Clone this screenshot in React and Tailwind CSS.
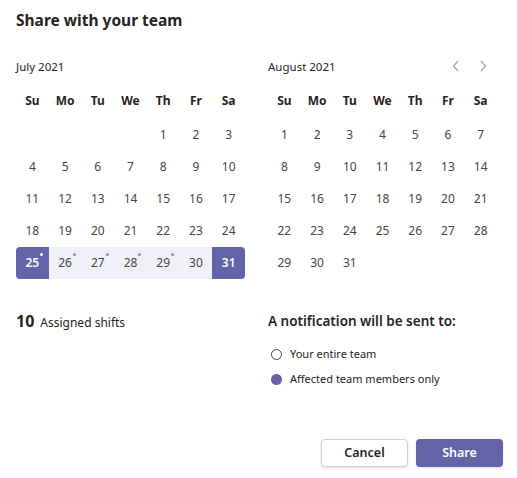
import React, { useState } from "react";

const DAYS = ["Su", "Mo", "Tu", "We", "Th", "Fr", "Sa"];

const julyCells = [
  null, null, null, null, 1, 2, 3,
  4, 5, 6, 7, 8, 9, 10,
  11, 12, 13, 14, 15, 16, 17,
  18, 19, 20, 21, 22, 23, 24,
  25, 26, 27, 28, 29, 30, 31,
];

const augustCells = [
  1, 2, 3, 4, 5, 6, 7,
  8, 9, 10, 11, 12, 13, 14,
  15, 16, 17, 18, 19, 20, 21,
  22, 23, 24, 25, 26, 27, 28,
  29, 30, 31, null, null, null, null,
];

const shiftDays = [25, 26, 27, 28, 29];

const DayCell = ({ day, range }) => {
  if (!day) return <div className="h-8" />;
  const inRange = range && day >= 25 && day <= 31;
  const isEdge = range && (day === 25 || day === 31);
  const hasShift = range && shiftDays.includes(day);

  let cls = "h-8 flex items-center justify-center text-[12px] text-[#484644]";
  if (inRange) cls = "h-8 flex items-center justify-center text-[12px] text-[#484644] bg-[#f0f0f8]";
  if (isEdge) cls = "h-8 flex items-center justify-center text-[12px] font-semibold text-white bg-[#6264a7]";
  const rounded = range && day === 25 ? " rounded-l" : range && day === 31 ? " rounded-r" : "";

  return (
    <div className={cls + rounded}>
      <span className="relative">
        {day}
        {hasShift && (
          <span
            className={
              "absolute -top-[1px] -right-[4px] w-[3px] h-[3px] rounded-full " +
              (day === 25 ? "bg-white" : "bg-[#8b8cc7]")
            }
          />
        )}
      </span>
    </div>
  );
};

const Month = ({ title, cells, range, nav }) => (
  <div className="w-[229px]">
    <div className="h-[30px] flex items-center justify-between">
      <span className="text-[11.5px] text-[#252423]">{title}</span>
      {nav && (
        <div className="flex items-center gap-[19px] pr-[10px] text-[#a19f9d] -mt-[3px]">
          <svg width="8" height="12" viewBox="0 0 8 12" fill="none">
            <path d="M6 1 L1.5 6 L6 11" stroke="currentColor" strokeWidth="1.2" />
          </svg>
          <svg width="8" height="12" viewBox="0 0 8 12" fill="none">
            <path d="M2 1 L6.5 6 L2 11" stroke="currentColor" strokeWidth="1.2" />
          </svg>
        </div>
      )}
    </div>
    <div className="grid grid-cols-7 mt-[3px]">
      {DAYS.map((d) => (
        <div key={d} className="h-8 flex items-center justify-center text-[12px] font-bold text-[#252423]">
          {d}
        </div>
      ))}
    </div>
    <div className="grid grid-cols-7 mt-[2px]">
      {cells.map((c, i) => (
        <DayCell key={i} day={c} range={range} />
      ))}
    </div>
  </div>
);

const Radio = ({ checked, label, onClick }) => (
  <button onClick={onClick} className="flex items-center gap-[8px] h-[25px] pl-[3px]">
    {checked ? (
      <span className="w-[11px] h-[11px] rounded-full bg-[#6264a7]" />
    ) : (
      <span className="w-[11px] h-[11px] rounded-full border border-[#484644] bg-white" />
    )}
    <span className="text-[11px] text-[#252423]">{label}</span>
  </button>
);

export default function App() {
  const [target, setTarget] = useState("affected");

  return (
    <div
      className="w-[517px] h-[478px] bg-white px-4 relative"
      style={{ fontFamily: "'Noto Sans', 'Open Sans', Arial, sans-serif" }}
    >
      <h1 className="pt-[8px] h-[52px] text-[15.5px] font-bold text-[#252423] leading-6">Share with your team</h1>

      <div className="flex gap-[23px]">
        <Month title="July 2021" cells={julyCells} range />
        <Month title="August 2021" cells={augustCells} nav />
      </div>

      <div className="flex mt-[30px]">
        <div className="w-[252px] flex items-baseline gap-[6px]">
          <span className="text-[16px] font-bold text-[#252423]">10</span>
          <span className="text-[12px] text-[#252423]">Assigned shifts</span>
        </div>
        <div>
          <div className="text-[13.5px] font-semibold text-[#252423] leading-6">A notification will be sent to:</div>
          <div className="mt-[9px] flex flex-col">
            <Radio checked={target === "all"} label="Your entire team" onClick={() => setTarget("all")} />
            <Radio checked={target === "affected"} label="Affected team members only" onClick={() => setTarget("affected")} />
          </div>
        </div>
      </div>

      <div className="flex justify-end gap-2 mt-[47px] mr-[-2px]">
        <button className="w-[87px] h-[28px] border border-[#d1d1d1] rounded-sm bg-white text-[12.5px] font-semibold text-[#252423] shadow-sm">
          Cancel
        </button>
        <button className="w-[87px] h-[28px] rounded-sm bg-[#6264a7] text-[12.5px] font-semibold text-white shadow-sm">
          Share
        </button>
      </div>
    </div>
  );
}
